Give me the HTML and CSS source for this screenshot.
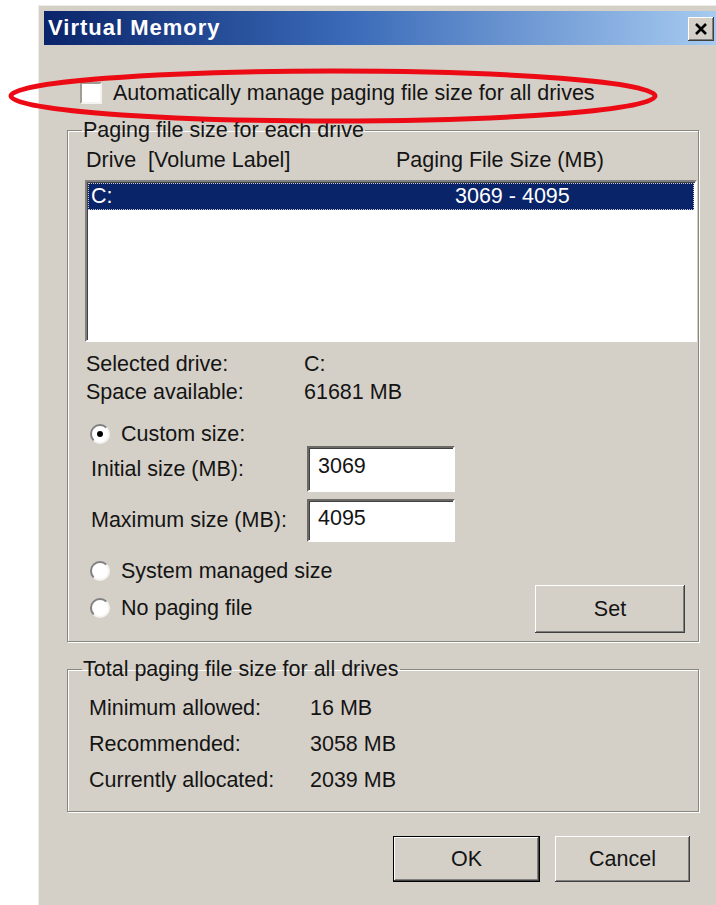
FILE: index.html
```html
<!DOCTYPE html>
<html lang="en">
<head>
<meta charset="utf-8">
<title>Virtual Memory</title>
<link rel="stylesheet" href="styles.css">
</head>
<body>
<div class="dialog">
  <div class="titlebar">
    <span class="title">Virtual Memory</span>
    <button class="close" type="button" aria-label="Close">
      <svg width="14" height="12" viewBox="0 0 14 12"><path d="M2 1 L12 11 M12 1 L2 11" stroke="#000" stroke-width="2.6" fill="none"/></svg>
    </button>
  </div>

  <div class="content">
    <label class="auto-row">
      <span class="checkbox"></span>
      <span>Automatically manage paging file size for all drives</span>
    </label>

    <fieldset class="group paging">
      <legend>Paging file size for each drive</legend>
      <div class="list-head">
        <span class="col-drive">Drive  [Volume Label]</span>
        <span class="col-size">Paging File Size (MB)</span>
      </div>
      <div class="listbox">
        <div class="list-row selected">
          <span class="cell-drive">C:</span>
          <span class="cell-size">3069 - 4095</span>
        </div>
      </div>

      <div class="info">
        <span>Selected drive:</span><span>C:</span>
        <span>Space available:</span><span>61681 MB</span>
      </div>

      <div class="radio-row custom">
        <span class="radio checked"></span><span>Custom size:</span>
      </div>

      <div class="size-row initial">
        <span class="size-label">Initial size (MB):</span>
        <span class="textbox">3069</span>
      </div>
      <div class="size-row maximum">
        <span class="size-label">Maximum size (MB):</span>
        <span class="textbox">4095</span>
      </div>

      <div class="mode-row">
        <div class="mode-radios">
          <div class="radio-row"><span class="radio"></span><span>System managed size</span></div>
          <div class="radio-row"><span class="radio"></span><span>No paging file</span></div>
        </div>
        <button class="btn set" type="button">Set</button>
      </div>
    </fieldset>

    <fieldset class="group totals">
      <legend>Total paging file size for all drives</legend>
      <div class="totals-grid">
        <span>Minimum allowed:</span><span>16 MB</span>
        <span>Recommended:</span><span>3058 MB</span>
        <span>Currently allocated:</span><span>2039 MB</span>
      </div>
    </fieldset>

    <div class="actions">
      <button class="btn ok" type="button">OK</button>
      <button class="btn cancel" type="button">Cancel</button>
    </div>
  </div>
</div>

<svg class="highlight" width="716" height="140" viewBox="0 0 716 140">
  <ellipse cx="333" cy="96" rx="322" ry="25" fill="none" stroke="#ec0a14" stroke-width="5"/>
</svg>
</body>
</html>
```

FILE: styles.css
```css
html, body {
  margin: 0;
  background: #ffffff;
  overflow: hidden;
  height: 905px;
}

body {
  position: relative;
  font-family: "Liberation Sans", Arial, sans-serif;
  font-size: 21.5px;
  color: #141414;
}

/* window frame */
.dialog {
  box-sizing: border-box;
  margin: 5px 0 0 38px;
  width: 684px;
  height: 920px;
  background: #d4d0c8;
  border-top: 1px solid #efede8;
  border-left: 1px solid #efede8;
  padding: 5px 6px 0 5px;
}

.titlebar {
  display: flex;
  justify-content: space-between;
  align-items: flex-start;
  height: 34px;
  background: linear-gradient(to right, #0a246a 0%, #3a6ab8 45%, #a6caf0 100%);
}

.title {
  padding-left: 4px;
  line-height: 34px;
  font-weight: bold;
  font-size: 22px;
  letter-spacing: 1px;
  color: #ffffff;
}

.close {
  display: flex;
  align-items: center;
  justify-content: center;
  width: 26px;
  height: 24px;
  margin: 6px 2px 0 0;
  padding: 0;
  background: #d4d0c8;
  border: none;
  box-shadow: inset -1px -1px 0 #404040, inset 1px 1px 0 #ffffff, inset -2px -2px 0 #808080;
}

.content {
  display: flex;
  flex-direction: column;
}

/* auto-manage checkbox */
.auto-row {
  display: flex;
  align-items: center;
  gap: 11px;
  height: 22px;
  margin: 37px 0 0 36px;
}

.checkbox {
  box-sizing: border-box;
  width: 22px;
  height: 22px;
  background: #ffffff;
  border: 2px solid;
  border-color: #a09c94 #f4f3f0 #f4f3f0 #a09c94;
}

/* group boxes */
.group {
  box-sizing: border-box;
  width: 632px;
  margin: 0 0 0 23px;
  padding: 0;
  border: 1px solid #8a8780;
  box-shadow: inset 1px 1px 0 #ffffff, 1px 1px 0 #ffffff;
  min-inline-size: 0;
}

.group legend {
  margin-left: 14px;
  padding: 0 1px;
  line-height: 22px;
}

.paging {
  margin-top: 15px;
  padding-bottom: 8px;
}

.totals {
  margin-top: 16px;
  padding-bottom: 13px;
}

/* drive list */
.list-head {
  display: flex;
  margin: 7px 0 0 18px;
  line-height: 24px;
}

.list-head .col-drive {
  width: 310px;
  white-space: pre;
}

.listbox {
  box-sizing: border-box;
  width: 612px;
  height: 162px;
  margin: 8px 0 0 17px;
  padding: 1px 1px 0 1px;
  background: #ffffff;
  border: 2px solid;
  border-color: #808080 #ffffff #ffffff #808080;
  box-shadow: inset 1px 1px 0 #404040;
}

.list-row {
  display: flex;
  height: 27px;
  align-items: center;
  box-sizing: border-box;
}

.list-row.selected {
  background: #0a246a;
  color: #ffffff;
  border: 1px dotted #c9c9d6;
}

.cell-drive {
  width: 364px;
  padding-left: 2px;
}

/* selected drive details */
.info {
  display: grid;
  grid-template-columns: 218px auto;
  margin: 8px 0 0 18px;
  line-height: 28px;
}

.radio-row {
  display: flex;
  align-items: center;
  gap: 11px;
  height: 22px;
}

.radio {
  position: relative;
  box-sizing: border-box;
  width: 20px;
  height: 20px;
  border-radius: 50%;
  background: #ffffff;
  border: 2px solid;
  border-color: #808080 #f4f3f0 #f4f3f0 #808080;
}

.radio.checked::after {
  content: "";
  position: absolute;
  left: 5px;
  top: 5px;
  width: 6px;
  height: 6px;
  border-radius: 50%;
  background: #000000;
}

.custom {
  margin: 17px 0 0 22px;
}

.size-row {
  display: flex;
  align-items: center;
  margin-left: 23px;
}

.size-label {
  width: 216px;
}

.textbox {
  box-sizing: border-box;
  width: 148px;
  padding: 0 0 6px 9px;
  display: flex;
  align-items: center;
  background: #ffffff;
  border: 2px solid;
  border-color: #6c6a66 #ffffff #ffffff #6c6a66;
  box-shadow: inset 1px 1px 0 #404040;
}

.initial {
  margin-top: 1px;
}

.initial .textbox {
  height: 46px;
}

.maximum {
  margin-top: 7px;
}

.maximum .textbox {
  height: 43px;
  padding-bottom: 4px;
}

.mode-row {
  display: flex;
  justify-content: space-between;
  align-items: flex-start;
  margin: 18px 13px 0 22px;
}

.mode-radios {
  display: flex;
  flex-direction: column;
  gap: 15px;
}

/* push buttons */
.btn {
  box-sizing: border-box;
  font: inherit;
  color: inherit;
  background: #d4d0c8;
  border: none;
  padding: 0;
  box-shadow: inset -1px -1px 0 #404040, inset 1px 1px 0 #ffffff, inset -2px -2px 0 #808080;
}

.set {
  width: 150px;
  height: 48px;
  margin-top: 25px;
}

/* totals */
.totals-grid {
  display: grid;
  grid-template-columns: 221px auto;
  margin: 10px 0 0 21px;
  line-height: 36px;
}

.actions {
  display: flex;
  justify-content: flex-end;
  gap: 15px;
  margin: 24px 26px 0 0;
}

.ok {
  width: 147px;
  height: 46px;
  box-shadow: inset 0 0 0 1px #000000, inset -2px -2px 0 #404040, inset 2px 2px 0 #ffffff, inset -3px -3px 0 #808080;
}

.cancel {
  width: 135px;
  height: 46px;
}

/* annotation drawn over the dialog */
.highlight {
  position: absolute;
  left: 0;
  top: 0;
  pointer-events: none;
}
```
